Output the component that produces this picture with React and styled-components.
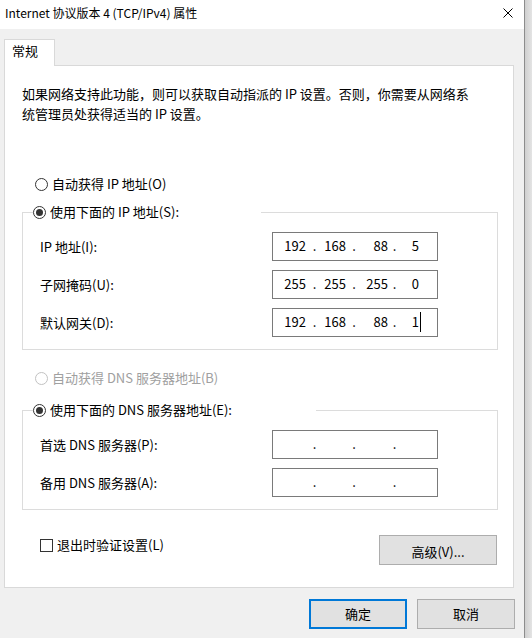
import React from "react";
import styled, { createGlobalStyle } from "styled-components";

const GlobalStyle = createGlobalStyle`
  html, body { margin: 0; padding: 0; background: #dcdcdc; }
  body {
    font-family: "Noto Sans CJK SC", "Noto Sans", sans-serif;
    font-size: 13px;
    color: #000;
  }
  * { box-sizing: border-box; }
`;

const Screen = styled.div`
  display: flex;
  width: 532px;
  height: 638px;
  overflow: hidden;
`;

const Window = styled.div`
  width: 525px;
  height: 638px;
  flex: none;
  display: flex;
  flex-direction: column;
  background: #f0f0f0;
  border-right: 1px solid #8c8c8c;
`;

const Shadow = styled.div`
  flex: 1;
  background: linear-gradient(to right, #cfcfcf, #e4e4e4);
`;

const TitleBar = styled.div`
  height: 29px;
  flex: none;
  background: #fff;
  display: flex;
  align-items: center;
  padding: 0 11px 3px 5px;
`;

const TitleText = styled.div`
  font-size: 12px;
  line-height: 16px;
  white-space: nowrap;
`;

const CloseIcon = styled.svg`
  margin-left: auto;
  width: 10px;
  height: 10px;
  display: block;
`;

const Body = styled.div`
  flex: 1;
  display: flex;
  flex-direction: column;
  padding: 10px 10px 0 4px;
`;

const TabRow = styled.div`
  display: flex;
`;

const Tab = styled.div`
  position: relative;
  z-index: 1;
  width: 51px;
  height: 27px;
  margin-bottom: -1px;
  border: 1px solid #d9d9d9;
  border-bottom: none;
  background: #fff;
  padding: 2px 0 0 7px;
  line-height: 18px;
`;

const Panel = styled.div`
  height: 523px;
  flex: none;
  border: 1px solid #d9d9d9;
  background: #fff;
  padding: 18px 15px 0 17px;
  display: flex;
  flex-direction: column;
`;

const Desc = styled.p`
  margin: 0;
  line-height: 20px;
  white-space: nowrap;
`;

const RadioRow = styled.label`
  display: flex;
  align-items: center;
  gap: 4px;
  height: 20px;
  line-height: 20px;
  white-space: nowrap;
  margin-left: ${(p) => p.$indent || 0}px;
  margin-top: ${(p) => p.$top || 0}px;
  color: ${(p) => (p.$disabled ? "#a0a0a0" : "#000")};
`;

const RadioCircle = styled.span`
  width: 13px;
  height: 13px;
  flex: none;
  border-radius: 50%;
  border: 1px solid ${(p) => (p.$disabled ? "#c2c2c2" : "#333")};
  background: #fff;
  display: flex;
  align-items: center;
  justify-content: center;
  &::after {
    content: "";
    width: 7px;
    height: 7px;
    border-radius: 50%;
    background: #333;
    display: ${(p) => (p.$checked ? "block" : "none")};
  }
`;

const Group = styled.fieldset`
  margin: ${(p) => p.$top}px 0 0 0;
  padding: 10px 0 12px 0;
  border: 1px solid #dcdcdc;
  min-width: 0;
`;

const Legend = styled.legend`
  margin-left: 10px;
  padding: 0;
  width: ${(p) => p.$width}px;
`;

const FieldGrid = styled.div`
  display: grid;
  grid-template-columns: 232px 166px;
  row-gap: 9px;
  align-items: center;
  padding-left: 17px;
`;

const FieldLabel = styled.span`
  line-height: 20px;
  white-space: nowrap;
`;

const IpBox = styled.div`
  height: 29px;
  border: 1px solid #7a7a7a;
  background: #fff;
  display: grid;
  grid-template-columns: 33px 17px 23px 16px 26px 13px 18px;
  align-items: center;
  padding-bottom: 2px;
  font-size: 13px;
  line-height: 20px;
`;

const Octet = styled.span`
  display: flex;
  justify-content: flex-end;
  align-items: center;
  white-space: nowrap;
`;

const Dot = styled.span`
  text-align: center;
`;

const Caret = styled.span`
  width: 1px;
  height: 20px;
  background: #000;
  margin-left: 1px;
  margin-right: -2px;
`;

const BottomRow = styled.div`
  margin-top: 25px;
  display: flex;
  align-items: center;
  justify-content: space-between;
  padding: 0 1px 0 18px;
`;

const CheckRow = styled.label`
  display: flex;
  align-items: center;
  gap: 4px;
  line-height: 20px;
  margin-top: -10px;
`;

const CheckBox = styled.span`
  width: 13px;
  height: 13px;
  border: 1px solid #333;
  background: #fff;
  flex: none;
`;

const Button = styled.button`
  width: ${(p) => p.$width}px;
  height: 30px;
  border: ${(p) => (p.$default ? "2px solid #0078d7" : "1px solid #adadad")};
  background: #e1e1e1;
  font-family: inherit;
  font-size: 13px;
  color: #000;
  padding: 0;
  line-height: 20px;
  padding-top: ${(p) => p.$nudge || 0}px;
`;

const Footer = styled.div`
  display: flex;
  justify-content: flex-end;
  gap: 10px;
  margin: 11px -1px 0 0;
`;

function Radio({ checked, disabled, children, indent, top }) {
  return (
    <RadioRow $disabled={disabled} $indent={indent} $top={top}>
      <RadioCircle $checked={checked} $disabled={disabled} />
      <span>{children}</span>
    </RadioRow>
  );
}

function IpField({ parts, caret }) {
  const p = parts || ["", "", "", ""];
  return (
    <IpBox>
      <Octet>{p[0]}</Octet>
      <Dot>.</Dot>
      <Octet>{p[1]}</Octet>
      <Dot>.</Dot>
      <Octet>{p[2]}</Octet>
      <Dot>.</Dot>
      <Octet>
        {p[3]}
        {caret && <Caret />}
      </Octet>
    </IpBox>
  );
}

export default function App() {
  return (
    <>
      <GlobalStyle />
      <Screen>
        <Window>
          <TitleBar>
            <TitleText>Internet 协议版本 4 (TCP/IPv4) 属性</TitleText>
            <CloseIcon viewBox="0 0 10 10">
              <path d="M0.5 0.5 L9.5 9.5 M9.5 0.5 L0.5 9.5" stroke="#000" strokeWidth="1" fill="none" />
            </CloseIcon>
          </TitleBar>
          <Body>
            <TabRow>
              <Tab>常规</Tab>
            </TabRow>
            <Panel>
              <Desc>
                如果网络支持此功能，则可以获取自动指派的 IP 设置。否则，你需要从网络系
                <br />
                统管理员处获得适当的 IP 设置。
              </Desc>
              <Radio indent={13} top={50}>自动获得 IP 地址(O)</Radio>
              <Group $top={8}>
                <Legend $width={228}>
                  <Radio checked>使用下面的 IP 地址(S):</Radio>
                </Legend>
                <FieldGrid>
                  <FieldLabel>IP 地址(I):</FieldLabel>
                  <IpField parts={["192", "168", "88", "5"]} />
                  <FieldLabel>子网掩码(U):</FieldLabel>
                  <IpField parts={["255", "255", "255", "0"]} />
                  <FieldLabel>默认网关(D):</FieldLabel>
                  <IpField parts={["192", "168", "88", "1"]} caret />
                </FieldGrid>
              </Group>
              <Radio indent={13} top={18} disabled>自动获得 DNS 服务器地址(B)</Radio>
              <Group $top={12}>
                <Legend $width={283}>
                  <Radio checked>使用下面的 DNS 服务器地址(E):</Radio>
                </Legend>
                <FieldGrid>
                  <FieldLabel>首选 DNS 服务器(P):</FieldLabel>
                  <IpField />
                  <FieldLabel>备用 DNS 服务器(A):</FieldLabel>
                  <IpField />
                </FieldGrid>
              </Group>
              <BottomRow>
                <CheckRow>
                  <CheckBox />
                  <span>退出时验证设置(L)</span>
                </CheckRow>
                <Button $width={118} $nudge={3}>高级(V)...</Button>
              </BottomRow>
            </Panel>
            <Footer>
              <Button $width={98} $default>确定</Button>
              <Button $width={98}>取消</Button>
            </Footer>
          </Body>
        </Window>
        <Shadow />
      </Screen>
    </>
  );
}
